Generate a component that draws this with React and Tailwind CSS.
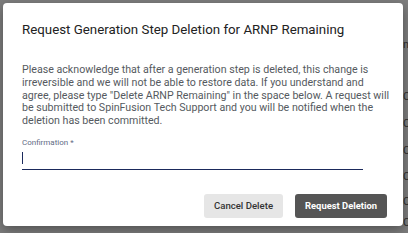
import React from "react";

const ghostRows = [
  { top: 38, text: "n" },
  { top: 90, text: "C" },
  { top: 117, text: "C" },
  { top: 144, text: "C" },
  { top: 170, text: "C" },
  { top: 195, text: "C" },
  { top: 216, text: "C" },
];

const App = () => {
  return (
    <div
      className="relative w-[408px] h-[233px] overflow-hidden bg-[#7d7d7d]"
      style={{ fontFamily: "Roboto, 'Liberation Sans', sans-serif" }}
    >
      {/* page content behind the overlay */}
      {ghostRows.map((row) => (
        <span
          key={row.top}
          className="absolute left-[403px] text-[11px] leading-[14px] text-[#2e2e2e]"
          style={{ top: row.top }}
        >
          {row.text}
        </span>
      ))}

      <div className="relative ml-[3px] mt-[3px] w-[400px] h-[223px] rounded-[4px] bg-white shadow-[0_4px_12px_rgba(0,0,0,0.35)] flex flex-col pl-[19px] pr-[10px]">
        <h2 className="pt-[19px] text-[13.3px] leading-[16px] text-[#222222] font-normal">
          Request Generation Step Deletion for ARNP Remaining
        </h2>

        <p className="mt-[26px] text-[10.65px] leading-[12.8px] text-[#555a60] whitespace-nowrap">
          Please acknowledge that after a generation step is deleted, this change is
          <br />
          irreversible and we will not be able to restore data. If you understand and
          <br />
          agree, please type "Delete ARNP Remaining" in the space below. A request will
          <br />
          be submitted to SpinFusion Tech Support and you will be notified when the
          <br />
          deletion has been committed.
        </p>

        <div className="mt-[10px] w-[341px]">
          <label className="block text-[8px] leading-[10px] text-[#5f6b85]">
            Confirmation *
          </label>
          <div className="mt-[3px] h-[19px] border-b-[1.5px] border-[#1b2a5c] flex items-start">
            <span className="mt-[1px] w-[1px] h-[12px] bg-[#1b2a5c]" />
          </div>
        </div>

        <div className="mt-auto mb-[8px] mr-[6px] flex justify-end gap-[12px]">
          <button className="w-[79px] h-[24px] rounded-[3px] bg-[#e6e6e6] text-[9.6px] font-medium text-[#333333]">
            Cancel Delete
          </button>
          <button className="w-[92px] h-[24px] rounded-[3px] bg-[#555555] text-[9.4px] font-bold text-white">
            Request Deletion
          </button>
        </div>
      </div>
    </div>
  );
};

export default App;
